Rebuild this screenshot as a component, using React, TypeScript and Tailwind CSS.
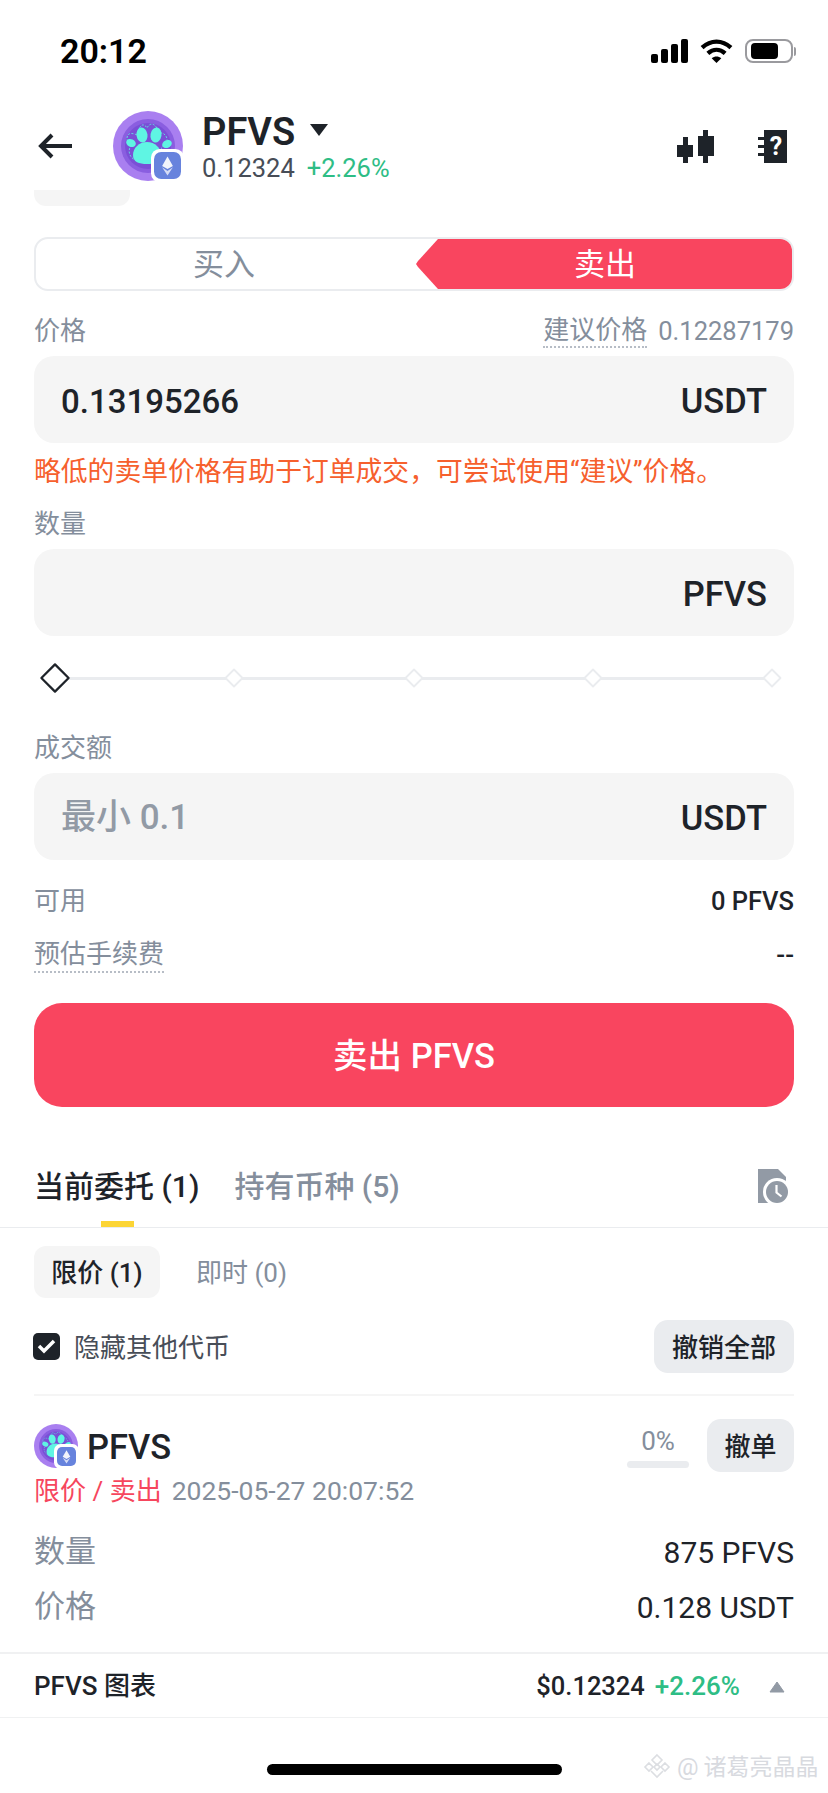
import { ReactNode } from "react";

const font = { fontFamily: '"Roboto","Noto Sans CJK SC",sans-serif' };

function PawLogo({ size }: { size: number }) {
  return (
    <svg width={size} height={size} viewBox="0 0 70 70">
      <circle cx="35" cy="35" r="35" fill="#a97ff0" />
      <circle cx="35" cy="35" r="27" fill="#8a5ee0" />
      <circle cx="35" cy="35" r="23" fill="#7a4fd6" />
      <path
        d="M14 27c1-8 9-3 11-3 0-8 5-14 9-7 3-7 11-4 11 6 4-3 10 1 9 8-2 4-7 3-5 8 2 10-10 13-20 12-10-1-16-8-11-17-3-1-4-4-4-7z"
        fill="none"
        stroke="#5ff5e3"
        strokeWidth="0.8"
        strokeDasharray="2 1.500"
      />
      <g fill="#5ff5e3">
        <ellipse cx="29" cy="24" rx="5.500" ry="7.500" transform="rotate(-8 29 24)" />
        <ellipse cx="43" cy="24" rx="5.500" ry="7.500" transform="rotate(10 43 24)" />
        <ellipse cx="18" cy="32" rx="5" ry="3.800" transform="rotate(25 18 32)" />
        <ellipse cx="54" cy="33" rx="5" ry="3.800" transform="rotate(-25 54 33)" />
        <path d="M34 31c8 0 14 6 14 13 0 7-6 9-14 9s-14-2-14-9c0-7 6-13 14-13z" />
      </g>
    </svg>
  );
}

function EthBadge({ size }: { size: number }) {
  return (
    <div
      className="absolute bottom-[-1px] right-[-1px] rounded-[26%] bg-white p-[3px]"
      style={{ width: size + 6, height: size + 6 }}
    >
      <svg width={size} height={size} viewBox="0 0 30 30" className="block">
        <rect width="30" height="30" rx="8" fill="#6783dd" />
        <path d="M15 5l6 10.500-6 3.500-6-3.500z" fill="#f2f4fb" />
        <path d="M15 21l6-4-6 9-6-9z" fill="#d5dcf5" />
      </svg>
    </div>
  );
}

function CoinLogo({ size, badge }: { size: number; badge: number }) {
  return (
    <div className="relative shrink-0" style={{ width: size, height: size }}>
      <PawLogo size={size} />
      <EthBadge size={badge} />
    </div>
  );
}

function Field({ value, unit, muted }: { value?: string; unit: string; muted?: boolean }) {
  return (
    <div className="flex h-[87px] items-center justify-between rounded-[20px] bg-[#f5f5f5] px-[27px] pt-[4px] font-medium text-[#1e2329]">
      <span className={muted ? "text-[35px] text-[#929aa5]" : "text-[33px]"}>{value}</span>
      <span className="text-[34.500px]">{unit}</span>
    </div>
  );
}

function Diamond({ active }: { active?: boolean }) {
  const s = active ? "h-[32px] w-[32px]" : "h-[20px] w-[20px]";
  return (
    <div className="relative flex w-[32px] justify-center">
      <svg className={`${s} shrink-0`} viewBox="0 0 20 20">
        <path
          d="M10 1.500L18.500 10 10 18.500 1.500 10z"
          fill="#fff"
          stroke={active ? "#1e2329" : "#eaecef"}
          strokeWidth={active ? 1.4 : 1.8}
          strokeLinejoin="round"
        />
      </svg>
    </div>
  );
}

function Row({ left, right, className }: { left: ReactNode; right: ReactNode; className: string }) {
  return (
    <div className={`flex items-center justify-between ${className}`}>
      {left}
      {right}
    </div>
  );
}

export default function App() {
  return (
    <div className="h-[1793px] w-[828px] overflow-hidden bg-white text-[#1e2329]" style={font}>
      {/* status bar */}
      <div className="flex h-[102px] items-center justify-between pl-[60px] pr-[32px]">
        <span className="text-[34px] font-semibold leading-none text-black">20:12</span>
        <div className="flex items-center gap-[12px]">
          <svg width="37" height="24" viewBox="0 0 37 24" fill="#000">
            <rect x="0" y="15" width="7" height="9" rx="2" />
            <rect x="10" y="10" width="7" height="14" rx="2" />
            <rect x="20" y="5" width="7" height="19" rx="2" />
            <rect x="30" y="0" width="7" height="24" rx="2" />
          </svg>
          <svg width="33" height="25" viewBox="0 0 34 26" fill="none" stroke="#000" strokeWidth="4.400">
            <path d="M2 9c9-8.500 21-8.500 30 0" />
            <path d="M8 15c5.500-5 12.500-5 18 0" />
            <path d="M17 25l-5-5c3-2.500 7-2.500 10 0z" fill="#000" stroke="none" />
          </svg>
          <div className="flex items-center">
            <div className="h-[24px] w-[48px] rounded-[8px] border-2 border-[#9a9a9e] p-[2px] pl-[4px]">
              <div className="h-full w-[27px] rounded-[4px] bg-black" />
            </div>
            <div className="ml-[1px] h-[9px] w-[2px] rounded-r bg-[#9a9a9e]" />
          </div>
        </div>
      </div>

      {/* header */}
      <div className="flex h-[88px] items-center pl-[38px] pr-[41px]">
        <svg width="34" height="26" viewBox="0 0 34 26" fill="none" stroke="#1e2329" strokeWidth="4">
          <path d="M34 13H4M14 2L3 13l11 11" />
        </svg>
        <div className="ml-[41px]">
          <CoinLogo size={70} badge={27} />
        </div>
        <div className="ml-[19px] flex flex-col">
          <div className="flex h-[44px] items-center pt-[4px]">
            <span className="text-[38px] font-semibold leading-none">PFVS</span>
            <svg className="mb-[4px] ml-[15px]" width="18" height="12" viewBox="0 0 18 12" fill="#1e2329">
              <path d="M0 0h18L9 12z" />
            </svg>
          </div>
          <div className="flex h-[32px] items-center pt-[2px] text-[25.500px] leading-none">
            <span className="text-[#474d57]">0.12324</span>
            <span className="ml-[12px] text-[#2ebd85]">+2.26%</span>
          </div>
        </div>
        <svg className="ml-auto" width="37" height="33" viewBox="0 0 37 33" fill="#1e2329">
          <path d="M6 7h5v8h5v12h-5v6H6v-6H0V15h6z" />
          <path d="M26 0h5v6h6v20h-6v7h-5v-7h-5V6h5z" />
        </svg>
        <svg className="ml-[44px]" width="29" height="33" viewBox="0 0 29 33">
          <path d="M6 0h23v33H6v-7H0v-3h6v-5H0v-3h6v-5H0V7h6z" fill="#1e2329" />
          <text x="18" y="25" textAnchor="middle" fontSize="25" fontWeight="700" fill="#fff">?</text>
        </svg>
      </div>

      {/* clipped chip left over from scroll */}
      <div className="ml-[34px] h-[16px] w-[96px] rounded-b-[12px] bg-[#f5f5f5]" />

      <div className="px-[34px]">
        {/* buy / sell toggle */}
        <div className="mt-[31px] flex h-[54px] items-stretch rounded-[14px] border-2 border-[#eaecef] text-[31px]">
          <div className="flex w-[380px] items-center justify-center pr-[4px] pt-[2px] text-[#848e9c]">买入</div>
          <div className="flex flex-1 items-center justify-center rounded-r-[12px] bg-[#f9455f] pl-[2px] pt-[2px] text-white [clip-path:polygon(22px_0,100%_0,100%_100%,22px_100%,2px_56%,0_50%,2px_44%)]">
            卖出
          </div>
        </div>

        <Row
          className="mt-[24px] h-[32px] text-[26px] text-[#848e9c]"
          left={<span>价格</span>}
          right={
            <span className="flex items-center">
              <span className="border-b-2 border-dotted border-[#b7bdc6] leading-[32px]">建议价格</span>
              <span className="ml-[11px] text-[25.500px] text-[#848e9c]">0.12287179</span>
            </span>
          }
        />
        <div className="mt-[9px]">
          <Field value="0.13195266" unit="USDT" />
        </div>
        <p className="mt-[13px] h-[32px] whitespace-nowrap text-[26.800px] leading-[32px] text-[#f6602d]">
          略低的卖单价格有助于订单成交，可尝试使用“建议”价格。
        </p>
        <div className="mt-[20px] h-[32px] text-[26px] leading-[32px] text-[#848e9c]">数量</div>
        <div className="mt-[9px]">
          <Field unit="PFVS" />
        </div>

        {/* amount slider */}
        <div className="relative mt-[26px] flex h-[32px] items-center justify-between pl-[5px] pr-[6px]">
          <div className="absolute left-[30px] right-[20px] top-[15px] h-[3px] bg-[#eaecef]" />
          <Diamond active />
          <Diamond />
          <Diamond />
          <Diamond />
          <Diamond />
        </div>

        <div className="mt-[38px] h-[32px] text-[26px] leading-[32px] text-[#848e9c]">成交额</div>
        <div className="mt-[9px]">
          <Field value="最小 0.1" unit="USDT" muted />
        </div>

        <Row
          className="mt-[25px] h-[32px]"
          left={<span className="text-[26px] text-[#848e9c]">可用</span>}
          right={<span className="text-[25.500px] font-medium">0 PFVS</span>}
        />
        <Row
          className="mt-[20px] h-[36px]"
          left={
            <span className="border-b-2 border-dotted border-[#b7bdc6] text-[26px] leading-[34px] text-[#848e9c]">预估手续费</span>
          }
          right={<span className="text-[26px] font-medium">--</span>}
        />

        <button className="mt-[30px] flex h-[104px] w-full items-center justify-center rounded-[28px] bg-[#f9455f] pt-[3px] text-[34.500px] font-medium text-white">
          卖出 PFVS
        </button>
      </div>

      {/* order tabs */}
      <div className="relative mt-[40px] flex h-[81px] items-start border-b border-[#eaecef] pl-[34px] pr-[38px] pt-[20px] text-[30px] font-medium leading-[40px]">
        <span>当前委托 (1)</span>
        <span className="ml-[35px] text-[#848e9c]">持有币种 (5)</span>
        <svg className="ml-auto mt-[2px]" width="32" height="34" viewBox="0 0 32 34">
          <path d="M0 0h20l8 8v26H0z" fill="#929aa5" />
          <circle cx="19" cy="23" r="14" fill="#fff" />
          <circle cx="19" cy="23" r="11" fill="#929aa5" />
          <path d="M18.500 16v7.500l5 4" fill="none" stroke="#fff" strokeWidth="2.200" />
        </svg>
        <div className="absolute bottom-0 left-[101px] h-[6px] w-[33px] bg-[#fcd535]" />
      </div>

      <div className="px-[34px]">
        <div className="mt-[18px] flex h-[52px] items-center pt-0 text-[26px]">
          <span className="flex h-full w-[126px] items-center justify-center rounded-[12px] bg-[#f5f5f5] pt-[2px] font-medium">限价 (1)</span>
          <span className="ml-[36px] pt-[2px] text-[#848e9c]">即时 (0)</span>
        </div>

        <Row
          className="mt-[22px] h-[53px]"
          left={
            <span className="flex items-center text-[26px] text-[#474d57]">
              <span className="ml-[-1px] flex h-[27px] w-[27px] items-center justify-center rounded-[5px] bg-[#1e2329]">
                <svg width="19" height="15" viewBox="0 0 19 15" fill="none" stroke="#fff" strokeWidth="3.500">
                  <path d="M2 7l5 5L17 2" />
                </svg>
              </span>
              <span className="ml-[14px] pt-[3px]">隐藏其他代币</span>
            </span>
          }
          right={
            <span className="flex h-[53px] w-[140px] items-center justify-center rounded-[14px] bg-[#eaecef] pt-[3px] text-[26px] font-medium">撤销全部</span>
          }
        />
        <div className="mt-[21px] h-[2px] bg-[#f5f5f5]" />

        {/* order card */}
        <div className="mt-[23px] flex h-[53px] items-center">
          <CoinLogo size={44} badge={19} />
          <span className="ml-[9px] pt-[3px] text-[34.500px] font-medium leading-none">PFVS</span>
          <div className="ml-auto flex w-[62px] flex-col items-center">
            <span className="text-[26px] leading-[34px] text-[#848e9c]">0%</span>
            <div className="mt-[3px] h-[7px] w-full rounded-full bg-[#eaecef]" />
          </div>
          <span className="ml-[18px] flex h-[53px] w-[87px] items-center justify-center rounded-[14px] bg-[#eaecef] pt-[3px] text-[26px] font-medium">撤单</span>
        </div>
        <div className="mt-[3px] flex h-[32px] items-center text-[26px] leading-none">
          <span className="text-[#f6465d]">限价 / 卖出</span>
          <span className="ml-[10px] text-[26.500px] text-[#848e9c]">2025-05-27 20:07:52</span>
        </div>
        <Row
          className="mt-[25px] h-[40px]"
          left={<span className="text-[31px] text-[#848e9c]">数量</span>}
          right={<span className="text-[30px]">875 PFVS</span>}
        />
        <Row
          className="mt-[15px] h-[40px]"
          left={<span className="text-[31px] text-[#848e9c]">价格</span>}
          right={<span className="text-[30px]">0.128 USDT</span>}
        />
      </div>

      {/* chart bar */}
      <div className="mt-[25px] flex h-[66px] items-center border-b border-t-2 border-[#f0f1f2] px-[34px] pt-[2px] text-[26px] font-medium">
        <span>PFVS 图表</span>
        <span className="ml-auto text-[25.500px]">$0.12324</span>
        <span className="ml-[10px] text-[#2ebd85]">+2.26%</span>
        <svg className="ml-[29px] mr-[9px]" width="16" height="12" viewBox="0 0 16 12" fill="#929aa5" stroke="#929aa5" strokeLinejoin="round">
          <path d="M8 1l7 10H1z" />
        </svg>
      </div>

      {/* home indicator and watermark */}
      <div className="relative ml-[267px] mt-[46px] h-[11px] w-[295px] rounded-full bg-black">
        <div className="absolute left-[376px] top-[-13px] flex h-[32px] items-center whitespace-nowrap text-[23px] leading-none text-[#d8dadf]">
          <svg width="28" height="28" viewBox="0 0 28 28" fill="none" stroke="#dcdee2" strokeWidth="1.600">
            <path d="M14 2l5 5-5 5-5-5z" />
            <path d="M14 11l3 3-3 3-3-3z" />
            <path d="M6 10l4 4-4 4-4-4zM22 10l4 4-4 4-4-4z" />
            <path d="M8 18l6 6 6-6" />
          </svg>
          <span className="ml-[6px] mr-[5px] text-[24px]">@</span>
          <span>诸葛亮晶晶</span>
        </div>
      </div>
    </div>
  );
}
